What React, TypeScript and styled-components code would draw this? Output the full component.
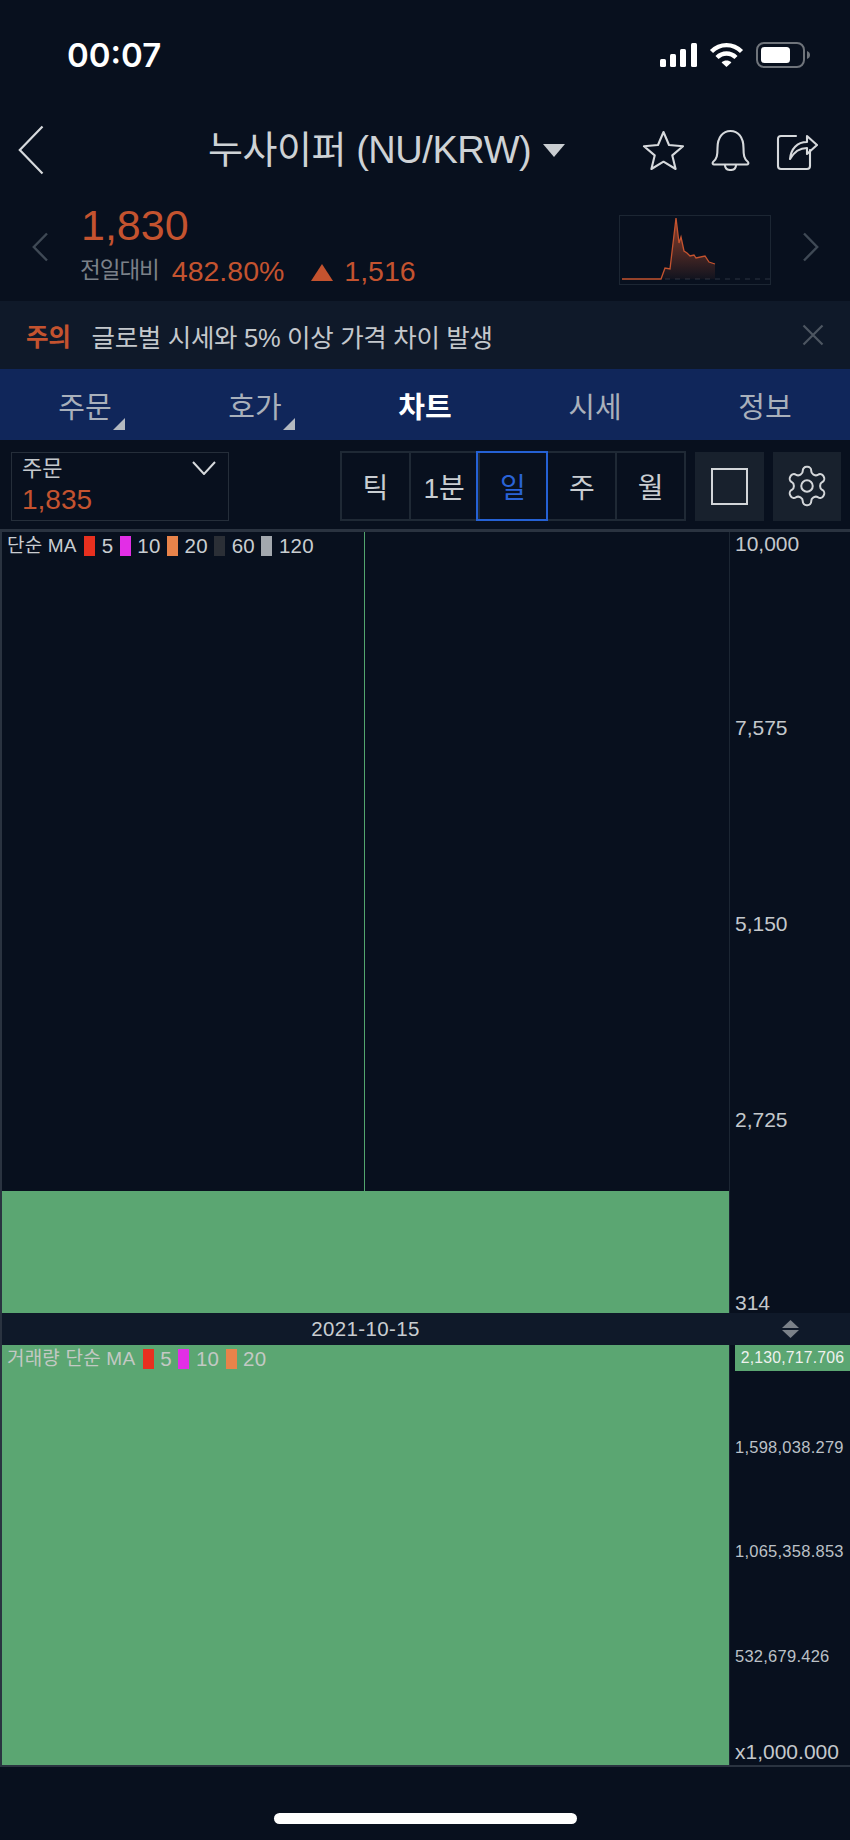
import React from 'react';
import styled, { createGlobalStyle } from 'styled-components';

const BG = '#08101e';
const RED = '#c4532f';
const GREEN = '#5ba672';
const LINE = '#1c2633';
const TEXT = '#c9cdd1';
const FONT = '"Liberation Sans", "Noto Sans CJK KR", sans-serif';

const GlobalStyle = createGlobalStyle`
  html, body {
    margin: 0;
    padding: 0;
    background: ${BG};
    font-family: ${FONT};
  }
`;

const Page = styled.div`
  width: 850px;
  height: 1840px;
  display: flex;
  flex-direction: column;
  background: ${BG};
  color: ${TEXT};
  overflow: hidden;
`;

const StatusBar = styled.div`
  height: 100px;
  display: flex;
  justify-content: space-between;
  align-items: center;
  padding: 10px 40px 0 67px;
  box-sizing: border-box;
`;

const Time = styled.div`
  font-family: Inter, sans-serif;
  font-size: 33px;
  font-weight: 600;
  color: #fff;
`;

const StatusIcons = styled.div`
  display: flex;
  align-items: center;
  gap: 12px;
`;

const NavBar = styled.div`
  height: 100px;
  position: relative;
  display: flex;
  align-items: center;
  justify-content: space-between;
  padding: 0 32px 0 18px;
  box-sizing: border-box;
`;

const NavTitle = styled.div`
  position: absolute;
  left: 208px;
  top: 28px;
  display: flex;
  align-items: center;
  gap: 12px;
  font-size: 38px;
  line-height: 44px;
  letter-spacing: -0.45px;
  color: #ced2d5;
`;

const Caret = styled.div`
  width: 0;
  height: 0;
  border-left: 11px solid transparent;
  border-right: 11px solid transparent;
  border-top: 13px solid #c9cdd1;
`;

const NavActions = styled.div`
  display: flex;
  align-items: center;
  gap: 26px;
`;

const PriceRow = styled.div`
  height: 93px;
  display: flex;
  align-items: center;
  padding: 0 31px 0 32px;
  box-sizing: border-box;
`;

const PriceBlock = styled.div`
  margin-left: 33px;
  flex: 1;
  display: flex;
  flex-direction: column;
  margin-top: -3px;
`;

const PriceValue = styled.div`
  font-size: 43px;
  line-height: 49px;
  color: ${RED};
`;

const PriceChange = styled.div`
  display: flex;
  align-items: center;
  margin-top: 3px;
  font-size: 28.5px;
  line-height: 36px;
  color: ${RED};
`;

const ChangeLabel = styled.span`
  font-size: 22.5px;
  color: #7b8189;
  margin: 0 13px 0 -1px;
  letter-spacing: -1px;
`;

const UpArrow = styled.span`
  width: 0;
  height: 0;
  margin: 2px 11px 0 27px;
  border-left: 11px solid transparent;
  border-right: 11px solid transparent;
  border-bottom: 17px solid ${RED};
`;

const MiniChart = styled.div`
  width: 152px;
  height: 70px;
  margin: 7px 32px 0 0;
  border: 1px solid ${LINE};
  box-sizing: border-box;
`;

const Notice = styled.div`
  height: 68px;
  margin-top: 8px;
  display: flex;
  align-items: center;
  padding: 0 26px;
  background: #0f1929;
  font-size: 25.5px;
  letter-spacing: -0.3px;
`;

const NoticeTag = styled.span`
  color: ${RED};
  font-weight: 700;
  font-size: 24.5px;
  margin-right: 21px;
`;

const NoticeText = styled.span`
  flex: 1;
  color: #c4c8cc;
`;

const Tabs = styled.div`
  height: 71px;
  display: grid;
  grid-template-columns: repeat(5, 1fr);
  background: #10265a;
`;

const Tab = styled.div<{ $active?: boolean; $corner?: boolean }>`
  position: relative;
  display: flex;
  align-items: center;
  justify-content: center;
  font-size: 29px;
  font-weight: ${(p) => (p.$active ? 700 : 400)};
  color: ${(p) => (p.$active ? '#fff' : '#a9b0bb')};

  &::after {
    content: '';
    display: ${(p) => (p.$corner ? 'block' : 'none')};
    position: absolute;
    left: 113px;
    bottom: 10px;
    width: 0;
    height: 0;
    border-left: 12px solid transparent;
    border-bottom: 12px solid #b4b9c0;
  }
`;

const Toolbar = styled.div`
  height: 89px;
  display: flex;
  align-items: center;
  padding: 3px 9px 0 11px;
  box-sizing: border-box;
`;

const Select = styled.div`
  width: 218px;
  height: 69px;
  position: relative;
  border: 1px solid #252e3a;
  box-sizing: border-box;
  padding: 1px 10px;
  margin-right: 111px;
  flex: none;
`;

const SelectLabel = styled.div`
  font-size: 22px;
  line-height: 30px;
  color: #c4c8cc;
`;

const SelectPrice = styled.div`
  font-size: 28px;
  line-height: 31px;
  color: ${RED};
`;

const SelectChevron = styled.svg`
  position: absolute;
  right: 12px;
  top: 8px;
`;

const Segment = styled.div`
  display: flex;
  width: 346px;
  height: 70px;
  border: 2px solid #1f2935;
  box-sizing: border-box;
  margin-right: 9px;
  flex: none;
`;

const SegmentItem = styled.div<{ $active?: boolean }>`
  flex: 1;
  display: flex;
  align-items: center;
  justify-content: center;
  font-size: 28px;
  color: ${(p) => (p.$active ? '#2a63d6' : '#c9cdd1')};
  border-left: 2px solid #1f2935;
  box-sizing: border-box;
  outline: ${(p) => (p.$active ? '2px solid #2561d4' : 'none')};
  z-index: ${(p) => (p.$active ? 1 : 0)};

  &:first-child {
    border-left: 0;
  }
`;

const SquareButton = styled.div<{ $gap?: number }>`
  width: 69px;
  height: 69px;
  margin-left: ${(p) => p.$gap ?? 0}px;
  display: flex;
  align-items: center;
  justify-content: center;
  background: #18212d;
`;

const SquareGlyph = styled.div`
  width: 33px;
  height: 33px;
  border: 2px solid #d3d6d9;
`;

const Chart = styled.div`
  flex: none;
  border-top: 3px solid #2a3340;
  border-bottom: 2px solid #2a3340;
  border-left: 2px solid #2a3340;
  display: grid;
  grid-template-columns: 727px 1fr;
  grid-template-rows: 781px 32px 420px;
`;

const Plot = styled.div`
  position: relative;
  display: flex;
  flex-direction: column;
  align-items: center;
`;

const Wick = styled.div`
  flex: 1;
  width: 1px;
  margin-right: 3px;
  background: #52a56e;
`;

const Candle = styled.div`
  width: 100%;
  height: 122px;
  background: ${GREEN};
`;

const VolumeBar = styled.div`
  flex: 1;
  width: 100%;
  background: ${GREEN};
`;

const Legend = styled.div<{ $color?: string }>`
  position: absolute;
  left: 5px;
  top: 2px;
  display: flex;
  align-items: center;
  font-size: 20.5px;
  line-height: 24px;
  letter-spacing: 0.2px;
  color: ${(p) => p.$color ?? TEXT};
`;

const LegendTitle = styled.span`
  font-size: 19px;
  margin-right: 1px;
`;

const Swatch = styled.span<{ $color: string }>`
  width: 11px;
  height: 20px;
  margin: 0 6.5px 0 6.5px;
  background: ${(p) => p.$color};
`;

const Axis = styled.div<{ $rows: string }>`
  border-left: 1px solid ${LINE};
  display: grid;
  grid-template-rows: ${(p) => p.$rows};
  padding-left: 5px;
  font-size: 21px;
  line-height: 24px;
  color: #c4c8cc;
`;

const VolumeLabel = styled.div`
  font-size: 16.5px;
  line-height: 24px;
  color: #bcc1c7;
  letter-spacing: 0.25px;
`;

const LastVolume = styled.div`
  height: 26px;
  display: flex;
  align-items: center;
  justify-content: center;
  background: ${GREEN};
  color: #eef1ee;
  font-size: 15.8px;
  letter-spacing: 0.2px;
`;

const DateBar = styled.div`
  background: #0f1929;
  display: flex;
  align-items: center;
  justify-content: center;
  font-size: 20.5px;
  letter-spacing: 0.35px;
  color: #c9cdd1;
`;

const ScaleHandle = styled.div`
  background: #0f1929;
  display: flex;
  align-items: center;
  justify-content: center;
  padding-left: 2px;
`;

const HomeBar = styled.div`
  flex: 1;
  display: flex;
  align-items: flex-end;
  justify-content: center;
  padding-bottom: 16px;
`;

const HomeIndicator = styled.div`
  width: 303px;
  height: 11px;
  border-radius: 6px;
  background: #fff;
`;

const legendMain = [
  ['#e8301f', '5'],
  ['#e22ee6', '10'],
  ['#e8834a', '20'],
  ['#2b2f36', '60'],
  ['#a3a8ae', '120'],
];

const legendVolume = legendMain.slice(0, 3);

const priceTicks = ['10,000', '7,575', '5,150', '2,725', '314'];
const volumeTicks = ['1,598,038.279', '1,065,358.853', '532,679.426'];

const miniLine =
  '2,63 41,63 45,52 50,53 56,2 59,27 61,21 64,35 67,37 70,40 74,39 76,42 85,40 89,46 95,48';

const App: React.FC = () => (
  <Page>
    <GlobalStyle />
    <StatusBar>
      <Time>00:07</Time>
      <StatusIcons>
        <svg width="37" height="24" viewBox="0 0 37 24" fill="#fff">
          <rect x="0" y="16" width="6" height="8" rx="1.5" />
          <rect x="10" y="11" width="6" height="13" rx="1.5" />
          <rect x="20" y="6" width="6" height="18" rx="1.5" />
          <rect x="31" y="0" width="6" height="24" rx="1.5" />
        </svg>
        <svg width="35" height="26" viewBox="0 0 35 26" fill="none" stroke="#fff" strokeWidth="4.4">
          <path d="M2.5 9.5C11 1 24 1 32.5 9.5" />
          <path d="M8 15.5C13.5 10.2 21.5 10.2 27 15.5" />
          <path d="M17.5 25 L12.6 20.4 C15.4 18 19.6 18 22.4 20.4 Z" fill="#fff" stroke="none" />
        </svg>
        <svg width="54" height="26" viewBox="0 0 54 26" fill="none">
          <rect x="1" y="1" width="47" height="24" rx="7" stroke="#6f747b" strokeWidth="2" />
          <rect x="5" y="5" width="29" height="16" rx="3.5" fill="#fff" />
          <path d="M51 9c2 .7 3 2.2 3 4s-1 3.3-3 4z" fill="#6f747b" />
        </svg>
      </StatusIcons>
    </StatusBar>

    <NavBar>
      <svg width="26" height="50" viewBox="0 0 26 50" fill="none" stroke="#d6d9dc" strokeWidth="2.2">
        <path d="M24.5 1.5 1.8 25l22.7 23.5" />
      </svg>
      <NavTitle>
        누사이퍼 (NU/KRW)
        <Caret />
      </NavTitle>
      <NavActions>
        <svg width="43" height="40" viewBox="0 0 43 40" fill="none" stroke="#d6d9dc" strokeWidth="2.1" strokeLinejoin="round">
          <path d="M21.5 2 27 15l14 1.2-10.700 9.200 3.300 13.600L21.500 31.700 9.400 39l3.300-13.600L2 16.200 16 15z" />
        </svg>
        <svg width="39" height="42" viewBox="0 0 39 42" fill="none" stroke="#d6d9dc" strokeWidth="2.1" strokeLinejoin="round">
          <path d="M2 33c4-3 4.500-7 4.500-14C6.500 8 12 2 19.500 2S32.500 8 32.500 19c0 7 .5 11 4.500 14 1 1.500 0 2.500-1 2.500H3c-1 0-2-1-1-2.500z" />
          <path d="M14 36c0 3.500 2.500 5 5.500 5s5.500-1.500 5.500-5" />
        </svg>
        <svg width="42" height="42" viewBox="0 0 42 42" fill="none" stroke="#d6d9dc" strokeWidth="2.1" strokeLinejoin="round" strokeLinecap="round">
          <path d="M20 7H5C3 7 2 8 2 10v27c0 2 1 3 3 3h26c2 0 3-1 3-3V21" />
          <path d="M14 30c1-10 7-17 17-17V7l10 9-10 9v-6c-7 0-13 4-17 11z" />
        </svg>
      </NavActions>
    </NavBar>

    <PriceRow>
      <svg width="16" height="30" viewBox="0 0 16 30" fill="none" stroke="#3f4955" strokeWidth="2.4">
        <path d="M15 1.500 1.800 15 15 28.500" />
      </svg>
      <PriceBlock>
        <PriceValue>1,830</PriceValue>
        <PriceChange>
          <ChangeLabel>전일대비</ChangeLabel>
          482.80%
          <UpArrow />
          1,516
        </PriceChange>
      </PriceBlock>
      <MiniChart>
        <svg width="150" height="68" viewBox="0 0 150 68">
          <defs>
            <linearGradient id="miniFill" x1="0" y1="0" x2="0" y2="1">
              <stop offset="0" stopColor="#c4532f" stopOpacity="0.75" />
              <stop offset="1" stopColor="#c4532f" stopOpacity="0.05" />
            </linearGradient>
          </defs>
          <line x1="45" y1="63" x2="150" y2="63" stroke="#2a3340" strokeDasharray="5 5" />
          <polygon points={`${miniLine} 95,63 41,63`} fill="url(#miniFill)" />
          <polyline points={miniLine} fill="none" stroke="#c4532f" strokeWidth="1.300" />
        </svg>
      </MiniChart>
      <svg width="16" height="30" viewBox="0 0 16 30" fill="none" stroke="#3f4955" strokeWidth="2.4">
        <path d="M1 1.500 14.200 15 1 28.500" />
      </svg>
    </PriceRow>

    <Notice>
      <NoticeTag>주의</NoticeTag>
      <NoticeText>글로벌 시세와 5% 이상 가격 차이 발생</NoticeText>
      <svg width="22" height="22" viewBox="0 0 22 22" stroke="#4d5661" strokeWidth="2.2">
        <path d="M1.500 1.500 20.500 20.500M20.500 1.500 1.500 20.500" />
      </svg>
    </Notice>

    <Tabs>
      <Tab $corner>주문</Tab>
      <Tab $corner>호가</Tab>
      <Tab $active>차트</Tab>
      <Tab>시세</Tab>
      <Tab>정보</Tab>
    </Tabs>

    <Toolbar>
      <Select>
        <SelectLabel>주문</SelectLabel>
        <SelectPrice>1,835</SelectPrice>
        <SelectChevron width="24" height="14" viewBox="0 0 24 14" fill="none" stroke="#d6d9dc" strokeWidth="2">
          <path d="M1 1l11 12L23 1" />
        </SelectChevron>
      </Select>
      <Segment>
        <SegmentItem>틱</SegmentItem>
        <SegmentItem>1분</SegmentItem>
        <SegmentItem $active>일</SegmentItem>
        <SegmentItem>주</SegmentItem>
        <SegmentItem>월</SegmentItem>
      </Segment>
      <SquareButton>
        <SquareGlyph />
      </SquareButton>
      <SquareButton $gap={9}>
        <svg width="46" height="46" viewBox="0 0 24 24" fill="none" stroke="#d3d6d9" strokeWidth="1.050">
          <path d="M12.220 2h-.44a2 2 0 0 0-2 2v.18a2 2 0 0 1-1 1.730l-.43.25a2 2 0 0 1-2 0l-.15-.08a2 2 0 0 0-2.730.73l-.22.38a2 2 0 0 0 .73 2.730l.15.1a2 2 0 0 1 1 1.720v.51a2 2 0 0 1-1 1.740l-.15.09a2 2 0 0 0-.73 2.730l.22.38a2 2 0 0 0 2.730.73l.15-.08a2 2 0 0 1 2 0l.43.25a2 2 0 0 1 1 1.730V20a2 2 0 0 0 2 2h.44a2 2 0 0 0 2-2v-.18a2 2 0 0 1 1-1.730l.43-.25a2 2 0 0 1 2 0l.15.08a2 2 0 0 0 2.730-.73l.22-.39a2 2 0 0 0-.73-2.730l-.15-.08a2 2 0 0 1-1-1.740v-.5a2 2 0 0 1 1-1.740l.15-.09a2 2 0 0 0 .73-2.730l-.22-.38a2 2 0 0 0-2.730-.73l-.15.08a2 2 0 0 1-2 0l-.43-.25a2 2 0 0 1-1-1.730V4a2 2 0 0 0-2-2z" />
          <circle cx="12" cy="12" r="3" />
        </svg>
      </SquareButton>
    </Toolbar>

    <Chart>
      <Plot>
        <Legend>
          <LegendTitle>단순 MA</LegendTitle>
          {legendMain.map(([color, label]) => (
            <React.Fragment key={label}>
              <Swatch $color={color} />
              {label}
            </React.Fragment>
          ))}
        </Legend>
        <Wick />
        <Candle />
      </Plot>
      <Axis $rows="184px 196px 196px 183px 22px">
        {priceTicks.map((tick) => (
          <div key={tick}>{tick}</div>
        ))}
      </Axis>
      <DateBar>2021-10-15</DateBar>
      <ScaleHandle>
        <svg width="17" height="18" viewBox="0 0 17 18" fill="#7b8189">
          <path d="M8.500 0l8.500 8H0zM8.500 18 0 10h17z" />
        </svg>
      </ScaleHandle>
      <Plot>
        <Legend $color="#c3c9c4">
          <LegendTitle>거래량 단순 MA</LegendTitle>
          {legendVolume.map(([color, label]) => (
            <React.Fragment key={label}>
              <Swatch $color={color} />
              {label}
            </React.Fragment>
          ))}
        </Legend>
        <VolumeBar />
      </Plot>
      <Axis $rows="90px 104px 105px 96px 25px">
        <LastVolume>2,130,717.706</LastVolume>
        {volumeTicks.map((tick) => (
          <VolumeLabel key={tick}>{tick}</VolumeLabel>
        ))}
        <div>x1,000.000</div>
      </Axis>
    </Chart>

    <HomeBar>
      <HomeIndicator />
    </HomeBar>
  </Page>
);

export default App;
